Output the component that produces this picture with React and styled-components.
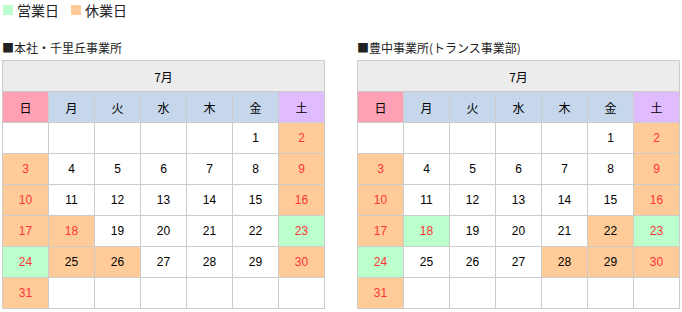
import React from "react";
import styled, { createGlobalStyle } from "styled-components";

const Global = createGlobalStyle`
  html, body { margin: 0; padding: 0; background: #fff; }
  body { font-family: "Liberation Sans", "Noto Sans CJK JP", sans-serif; color: #000; }
`;

const Page = styled.div`
  padding: 1px 0 0 2px;
`;

const Legend = styled.div`
  display: flex;
  align-items: center;
  gap: 12px;
  height: 18px;
  padding-left: 1px;
`;

const LegendItem = styled.div`
  display: flex;
  align-items: center;
  gap: 4px;
  font-family: "Noto Sans CJK JP", sans-serif;
  font-size: 14px;
  line-height: 18px;
  color: #222;
`;

const Swatch = styled.span`
  display: inline-block;
  width: 10px;
  height: 10px;
  background: ${(p) => p.$color};
`;

const Blocks = styled.div`
  display: flex;
  gap: 32px;
  margin-top: 21px;
`;

const Block = styled.div`
  display: flex;
  flex-direction: column;
`;

const Title = styled.div`
  font-family: "Noto Sans CJK JP", sans-serif;
  font-size: 12px;
  line-height: 16px;
  height: 20px;
  color: #222;
`;

const Table = styled.table`
  border-collapse: collapse;
  table-layout: fixed;
  width: 323px;
`;

const Cell = styled.td`
  border: 1px solid #cccccc;
  width: 45px;
  height: 31px;
  padding: 0;
  box-sizing: border-box;
  text-align: center;
  vertical-align: middle;
  font-family: "Liberation Sans", "Noto Sans CJK JP", sans-serif;
  font-size: 12px;
  background: ${(p) => p.$bg || "#fff"};
  color: ${(p) => (p.$red ? "#ff3333" : "#000")};
`;

const HeadCell = styled.th`
  border: 1px solid #cccccc;
  height: 31px;
  padding: 0;
  box-sizing: border-box;
  text-align: center;
  vertical-align: middle;
  font-family: "Noto Sans CJK JP", sans-serif;
  font-weight: normal;
  font-size: 12px;
  background: ${(p) => p.$bg};
  color: #000;
`;

const PEACH = "#ffcc99";
const GREEN = "#bbffcc";
const DAYS = [
  { t: "日", bg: "#ffa0b4" },
  { t: "月", bg: "#c6d7eb" },
  { t: "火", bg: "#c6d7eb" },
  { t: "水", bg: "#c6d7eb" },
  { t: "木", bg: "#c6d7eb" },
  { t: "金", bg: "#c6d7eb" },
  { t: "土", bg: "#e0bbff" },
];

function buildCells(offs, works) {
  const cells = [];
  for (let i = 0; i < 42; i++) {
    const d = i - 4;
    if (d < 1 || d > 31) {
      cells.push({ d: null });
      continue;
    }
    const dow = i % 7;
    const red = dow === 0 || dow === 6 || d === 18;
    let bg = null;
    if (offs.includes(d)) bg = PEACH;
    if (works.includes(d)) bg = GREEN;
    cells.push({ d, red, bg });
  }
  return cells;
}

const LEFT = buildCells([2, 3, 9, 10, 16, 17, 18, 25, 26, 30, 31], [23, 24]);
const RIGHT = buildCells([2, 3, 9, 10, 16, 17, 22, 28, 29, 30, 31], [18, 23, 24]);

function Calendar({ title, cells }) {
  const rows = [];
  for (let r = 0; r < 6; r++) rows.push(cells.slice(r * 7, r * 7 + 7));
  return (
    <Block>
      <Title>■{title}</Title>
      <Table>
        <thead>
          <tr>
            <HeadCell colSpan={7} $bg="#ececec">7月</HeadCell>
          </tr>
          <tr>
            {DAYS.map((d) => (
              <HeadCell key={d.t} $bg={d.bg}>{d.t}</HeadCell>
            ))}
          </tr>
        </thead>
        <tbody>
          {rows.map((row, ri) => (
            <tr key={ri}>
              {row.map((c, ci) => (
                <Cell key={ci} $bg={c.bg} $red={c.red}>
                  {c.d ?? ""}
                </Cell>
              ))}
            </tr>
          ))}
        </tbody>
      </Table>
    </Block>
  );
}

export default function App() {
  return (
    <Page>
      <Global />
      <Legend>
        <LegendItem>
          <Swatch $color="#bbffcc" />
          営業日
        </LegendItem>
        <LegendItem>
          <Swatch $color="#ffcc99" />
          休業日
        </LegendItem>
      </Legend>
      <Blocks>
        <Calendar title="本社・千里丘事業所" cells={LEFT} />
        <Calendar title="豊中事業所(トランス事業部)" cells={RIGHT} />
      </Blocks>
    </Page>
  );
}
